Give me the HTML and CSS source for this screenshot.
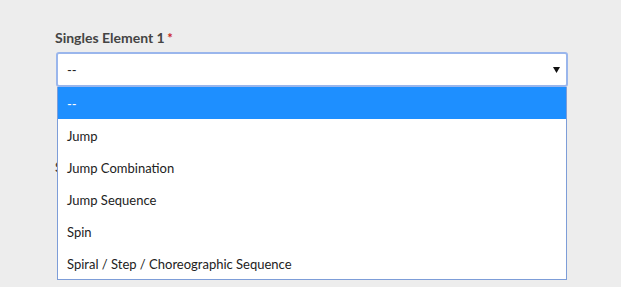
FILE: index.html
```html
<!DOCTYPE html>
<html lang="en">
<head>
  <meta charset="UTF-8" />
  <title>Singles Elements</title>
  <link rel="stylesheet" href="styles.css">
</head>
<body>

  <div class="form">
    <!-- Element 1, dropdown open -->
    <div class="field">
      <label class="field-label">Singles Element 1 <span class="req">*</span></label>
      <div class="select-wrap">
        <div class="select open">
          <span>--</span>
          <svg class="arrow" width="7" height="6" viewBox="0 0 7 6"><path d="M0 0 H7 L3.5 6 Z" fill="#111"/></svg>
        </div>
        <ul class="options">
          <li class="selected">--</li>
          <li>Jump</li>
          <li>Jump Combination</li>
          <li>Jump Sequence</li>
          <li>Spin</li>
          <li>Spiral / Step / Choreographic Sequence</li>
        </ul>
      </div>
    </div>

    <!-- Element 2, hidden behind the list -->
    <div class="field">
      <label class="field-label">Singles Element 2 <span class="req">*</span></label>
      <div class="select-wrap">
        <div class="select closed">
          <span>--</span>
        </div>
      </div>
    </div>
  </div>

</body>
</html>
```

FILE: styles.css
```css
html, body {
  margin: 0;
}

body {
  background-color: #ededed;
  font-family: Lato, "Open Sans", sans-serif;
  color: #222;
  min-height: 100vh;
}

.form {
  padding: 28px 53px 0 56px;
}

.field {
  margin-bottom: 70px;
}

.field:last-child {
  margin-bottom: 0;
}

.field-label {
  display: block;
  font-size: 14px;
  font-weight: bold;
  color: #444;
  line-height: 20px;
  margin-bottom: 4px;
  margin-left: -1px;
}

.req {
  color: #cc1f1f;
  font-size: 13px;
  margin-left: -1px;
}

.select-wrap {
  position: relative;
}

.select {
  height: 31px;
  background: white;
  border: 1px solid #bbb;
  border-radius: 3px;
  display: flex;
  align-items: center;
  justify-content: space-between;
  padding: 0 6px 0 10px;
  font-size: 13px;
}

.select.open {
  border: 2px solid #9ab6ec;
  padding-left: 9px;
}

.select.closed {
  margin: 0 1px;
}

.arrow {
  display: block;
  margin-top: 1px;
}

.options {
  position: absolute;
  top: 35px;
  left: 1px;
  right: 1px;
  margin: 0;
  padding: 0;
  list-style: none;
  background: white;
  border: 1px solid #7d9dd8;
  border-top: none;
  z-index: 2;
}

.options li {
  height: 30px;
  line-height: 30px;
  padding: 2px 0 0 9px;
  font-size: 13px;
  color: #222;
}

.options li.selected {
  background-color: #1e8fff;
  color: white;
}
```
